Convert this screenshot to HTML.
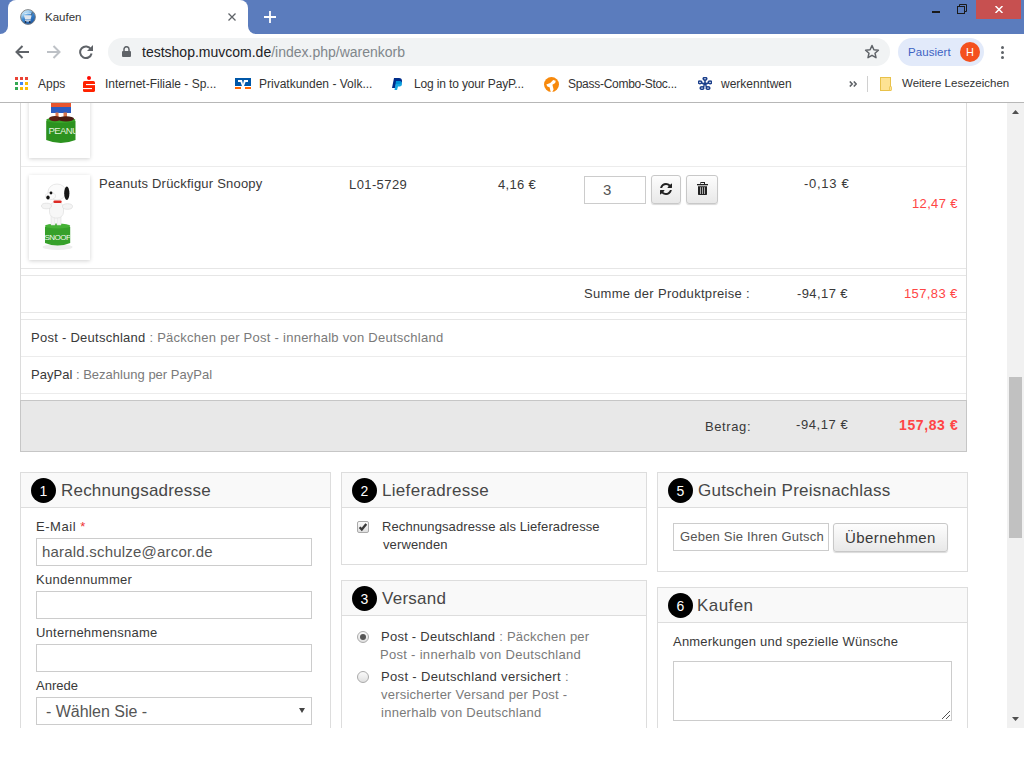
<!DOCTYPE html>
<html><head><meta charset="utf-8">
<style>
*{box-sizing:border-box;margin:0;padding:0}
html,body{width:1024px;height:768px;overflow:hidden;background:#fff;font-family:"Liberation Sans",sans-serif}
.a{position:absolute}
#tabs{left:0;top:0;width:1024px;height:34px;background:#5b7cbd}
#tab{left:8px;top:0;width:240px;height:34px;background:#fff;border-radius:8px 8px 0 0}
.flw{top:26px;width:8px;height:8px;background:#fff}
.flb{top:26px;width:8px;height:8px;background:#5b7cbd}
#toolbar{left:0;top:34px;width:1024px;height:36px;background:#fff}
#omni{left:108px;top:38px;width:782px;height:28px;background:#f1f3f4;border-radius:14px}
.bm{top:78px;font-size:12px;color:#333;white-space:nowrap;line-height:1}
#sep{left:0;top:102px;width:1024px;height:1px;background:#b7b7b7}
#page{left:0;top:103px;width:1007px;height:625px;overflow:hidden;background:#fff}
#sb{left:1007px;top:103px;width:17px;height:625px;background:#f1f1f1}

.t{position:absolute;white-space:nowrap;line-height:1;color:#393939}
.s13{font-size:13px;letter-spacing:0.3px}
.s17{font-size:17px;letter-spacing:0.2px;color:#474747}
.hl{position:absolute;height:1px;background:#e6e6e6}
.vl{position:absolute;width:1px;background:#dcdcdc}
.img{position:absolute;background:#fff;box-shadow:0 1px 4px rgba(0,0,0,0.18)}
.inp{position:absolute;border:1px solid #ccc;background:#fff}
.btn{position:absolute;border:1px solid #c8c8c8;border-radius:3px;background:linear-gradient(#fdfdfd,#e8e8e8);box-shadow:0 1px 1px rgba(0,0,0,0.15)}
.box{position:absolute;border:1px solid #ddd;background:#fff}
.bh{position:absolute;left:0;top:0;right:0;background:#f9f9f9;border-bottom:1px solid #ddd}
.num{position:absolute;width:25px;height:25px;border-radius:50%;background:#000;color:#fff;font-size:14px;line-height:27px;text-align:center}
.red{color:#ff4545}
.gr{color:#7a7a7a}
</style></head><body>
<!-- tab strip -->
<div class="a" id="tabs"></div>
<div class="a flw" style="left:0"></div><div class="a flb" style="left:0;border-bottom-right-radius:8px"></div>
<div class="a flw" style="left:248px"></div><div class="a flb" style="left:248px;border-bottom-left-radius:8px"></div>
<div class="a" id="tab"></div>
<svg class="a" style="left:20px;top:9px" width="16" height="16" viewBox="0 0 16 16">
<defs><linearGradient id="gl" x1="0.1" y1="0" x2="0.7" y2="1"><stop offset="0" stop-color="#e4f2fc"/><stop offset="0.3" stop-color="#9ccdf0"/><stop offset="0.5" stop-color="#3f8ad2"/><stop offset="1" stop-color="#1a56a4"/></linearGradient></defs>
<circle cx="8" cy="8" r="7.4" fill="url(#gl)" stroke="#7a7a7a" stroke-width="0.9"/>
<path d="M3.8 6.2H11.6L10.6 10.4H5.2Z" fill="#dfe5ec"/>
<path d="M11.4 6.4L12.4 3.2" stroke="#5a6470" stroke-width="1"/>
<path d="M4.5 4.8Q8 3.6 11 4.4" stroke="#eaf2fa" stroke-width="0.8" fill="none"/>
<rect x="5" y="11.2" width="5.5" height="1.4" fill="#d8dde4"/>
<circle cx="5.6" cy="13" r="0.9" fill="#1f2d44"/><circle cx="9.8" cy="13" r="0.9" fill="#1f2d44"/>
</svg>
<div id="c1" class="a" style="left:45px;top:12px;font-size:11.5px;line-height:1;color:#333">Kaufen</div>
<svg class="a" style="left:228px;top:13px" width="8" height="8" viewBox="0 0 8 8"><path d="M0.5 0.5L7.5 7.5M7.5 0.5L0.5 7.5" stroke="#5f6368" stroke-width="1.3"/></svg>
<svg class="a" style="left:264px;top:11px" width="12" height="12" viewBox="0 0 12 12"><path d="M6 0V12M0 6H12" stroke="#fff" stroke-width="1.8"/></svg>
<!-- window controls -->
<div class="a" style="left:932px;top:11px;width:8px;height:2px;background:#1a1a1a"></div>
<svg class="a" style="left:957px;top:4px" width="10" height="10" viewBox="0 0 10 10"><rect x="0.5" y="2.5" width="7" height="7" fill="none" stroke="#1a1a1a"/><path d="M2.5 2.5V0.5H9.5V7.5H7.5" fill="none" stroke="#1a1a1a"/></svg>
<div class="a" style="left:976px;top:0;width:45px;height:19px;background:#c75050"></div>
<svg class="a" style="left:995px;top:6px" width="8" height="7" viewBox="0 0 8 7"><path d="M0.5 0L7.5 7M7.5 0L0.5 7" stroke="#fff" stroke-width="1.5"/></svg>
<!-- toolbar -->
<div class="a" id="toolbar"></div>
<svg class="a" style="left:15px;top:45px" width="14" height="14" viewBox="0 0 14 14"><path d="M14 7H1.5M7.5 1L1.5 7L7.5 13" fill="none" stroke="#5f6368" stroke-width="2"/></svg>
<svg class="a" style="left:47px;top:45px" width="14" height="14" viewBox="0 0 14 14"><path d="M0 7H12.5M6.5 1L12.5 7L6.5 13" fill="none" stroke="#bdc1c6" stroke-width="2"/></svg>
<svg class="a" style="left:79px;top:45px" width="14" height="14" viewBox="0 0 14 14"><path d="M11.9 4.2A5.8 5.8 0 1 0 12.6 8.5" fill="none" stroke="#5f6368" stroke-width="2"/><path d="M14 0V6H8z" fill="#5f6368"/></svg>
<div class="a" id="omni"></div>
<svg class="a" style="left:122px;top:46px" width="9" height="11" viewBox="0 0 9 11"><path d="M2 5V3.2A2.5 2.5 0 0 1 7 3.2V5" fill="none" stroke="#5f6368" stroke-width="1.5"/><rect x="0" y="5" width="9" height="6" rx="1" fill="#5f6368"/></svg>
<div id="c3" class="a" style="left:142px;top:45px;font-size:14px;line-height:1;color:#202124;white-space:nowrap">testshop.muvcom.de<span style="color:#80868b">/index.php/warenkorb</span></div>
<svg class="a" style="left:864px;top:44px" width="16" height="16" viewBox="0 0 16 16"><path d="M8 1.5L9.9 5.8L14.4 6.2L11 9.2L12 13.7L8 11.3L4 13.7L5 9.2L1.6 6.2L6.1 5.8Z" fill="none" stroke="#5f6368" stroke-width="1.5" stroke-linejoin="round"/></svg>
<div class="a" style="left:898px;top:38px;width:86px;height:28px;background:#e2eafa;border-radius:14px"></div>
<div id="c2" class="a" style="left:908px;top:47px;font-size:11.5px;line-height:1;color:#3d62c4;letter-spacing:0.071px">Pausiert</div>
<div class="a" style="left:960px;top:42px;width:20px;height:20px;border-radius:10px;background:#f4511e;color:#fff;font-size:11px;line-height:21px;text-align:center">H</div>
<div class="a" style="left:1001px;top:46px;width:3.2px;height:3.2px;border-radius:50%;background:#5f6368"></div>
<div class="a" style="left:1001px;top:51px;width:3.2px;height:3.2px;border-radius:50%;background:#5f6368"></div>
<div class="a" style="left:1001px;top:56px;width:3.2px;height:3.2px;border-radius:50%;background:#5f6368"></div>
<!-- bookmarks -->
<svg class="a" style="left:15px;top:77px" width="13" height="13" viewBox="0 0 13 13">
<rect x="0" y="0" width="3" height="3" fill="#ea4335"/><rect x="5" y="0" width="3" height="3" fill="#ea4335"/><rect x="10" y="0" width="3" height="3" fill="#ea4335"/>
<rect x="0" y="5" width="3" height="3" fill="#34a853"/><rect x="5" y="5" width="3" height="3" fill="#4285f4"/><rect x="10" y="5" width="3" height="3" fill="#fbbc05"/>
<rect x="0" y="10" width="3" height="3" fill="#34a853"/><rect x="5" y="10" width="3" height="3" fill="#fbbc05"/><rect x="10" y="10" width="3" height="3" fill="#fbbc05"/>
</svg>
<div id="b1" class="a bm" style="left:38px">Apps</div>
<svg class="a" style="left:83px;top:76px" width="12" height="16" viewBox="0 0 12 16"><circle cx="6" cy="2" r="2" fill="#ff0a00"/><rect x="0" y="5" width="12" height="11" rx="1.6" fill="#ff2200"/><rect x="3" y="8" width="9" height="1.1" fill="#fff"/><rect x="0" y="12" width="9" height="1.1" fill="#fff"/></svg>
<div id="b2" class="a bm" style="left:105px">Internet-Filiale - Sp...</div>
<svg class="a" style="left:235px;top:78px" width="16" height="11" viewBox="0 0 16 11"><rect x="0" y="0" width="16" height="8" fill="#0057a8"/><path d="M3 2H7L8 6L9 2H13V4H10.5L9 8H7L5.5 4H3Z" fill="#fff"/><rect x="0" y="9" width="6" height="2" fill="#ff6600"/><rect x="10" y="9" width="6" height="2" fill="#ff6600"/></svg>
<div id="b3" class="a bm" style="left:259px">Privatkunden - Volk...</div>
<svg class="a" style="left:392px;top:78px" width="11" height="12" viewBox="0 0 11 12"><path d="M2 0H7A3 3 0 0 1 7 6H4L3 10H0Z" fill="#002c8a"/><path d="M4 3H8.5A3 3 0 0 1 8 8.5H6L5 12H2.5Z" fill="#009cde" opacity="0.9"/></svg>
<div id="b4" class="a bm" style="left:414px;letter-spacing:-0.148px">Log in to your PayP...</div>
<svg class="a" style="left:544px;top:77px" width="15" height="15" viewBox="0 0 15 15"><circle cx="7.5" cy="7.5" r="7.5" fill="#f7890c"/><path d="M2.3 7.6L6.2 5.9L9.2 2.9L11.7 3.8L11.2 6.1L8.4 7.8L9.6 12.6L8.2 15.2L6.6 14.8L5.6 10.2L3.4 9.4Z" fill="#fff"/></svg>
<div id="b5" class="a bm" style="left:568px;letter-spacing:-0.278px">Spass-Combo-Stoc...</div>
<svg class="a" style="left:698px;top:77px" width="14" height="13" viewBox="0 0 14 13"><g fill="none" stroke="#1b3f8b" stroke-width="1.6"><ellipse cx="7" cy="1.8" rx="1.8" ry="1.3"/><ellipse cx="2" cy="5.3" rx="1.8" ry="1.3"/><ellipse cx="12" cy="5.3" rx="1.8" ry="1.3"/><ellipse cx="4" cy="11" rx="1.8" ry="1.3"/><ellipse cx="10" cy="11" rx="1.8" ry="1.3"/></g><rect x="5.5" y="5.5" width="3" height="3" fill="#1b3f8b"/><path d="M7 3V6M3.5 6L6 7M10.5 6L8 7M5 10L6.5 8.5M9 10L7.5 8.5" stroke="#1b3f8b" stroke-width="1.5"/></svg>
<div id="b6" class="a bm" style="left:721px">werkenntwen</div>
<svg class="a" style="left:849px;top:81px" width="8" height="6" viewBox="0 0 8 6"><path d="M0.8 0.5L3.2 3L0.8 5.5M4.8 0.5L7.2 3L4.8 5.5" fill="none" stroke="#5f6368" stroke-width="1.6"/></svg>
<div class="a" style="left:867px;top:76px;width:1px;height:16px;background:#d0d0d0"></div>
<svg class="a" style="left:880px;top:77px" width="12" height="14" viewBox="0 0 12 14"><rect x="0.5" y="0.5" width="10" height="13" fill="#fde293" stroke="#e8c14a"/><rect x="9.5" y="9.5" width="2" height="4" rx="0.6" fill="#fde293" stroke="#e8c14a" stroke-width="0.8"/></svg>
<div id="b7" class="a bm" style="left:902px;font-size:11.5px">Weitere Lesezeichen</div>
<div class="a" id="sep"></div>
<!-- page -->
<div class="a" id="page"></div>

<div class="a" style="left:0;top:0;width:1007px;height:728px;clip-path:inset(103px 0 0 0)">
<!-- product table -->
<div class="vl" style="left:20px;top:103px;height:297px"></div>
<div class="vl" style="left:966px;top:103px;height:297px"></div>
<div class="img" style="left:29px;top:90px;width:61px;height:68px">
<svg width="61" height="68" viewBox="0 0 61 68">
<defs><clipPath id="cp1"><path d="M17.2 31Q31.8 26 46.5 31V50Q31.8 56 17.2 50Z"/></clipPath></defs>
<rect x="22" y="12" width="20" height="5.5" fill="#e8552e"/>
<rect x="22" y="17" width="20" height="6" fill="#2b5cc0"/>
<rect x="26.5" y="22.5" width="3" height="5" fill="#e07a50"/><rect x="34.5" y="22.5" width="3.5" height="5" fill="#d8744a"/>
<path d="M17.2 31Q31.8 26 46.5 31V50Q31.8 56 17.2 50Z" fill="#2c921f"/>
<ellipse cx="31.8" cy="30" rx="14.6" ry="3" fill="#38a428"/>
<ellipse cx="26" cy="28.6" rx="6" ry="2.6" fill="#5a2015"/><ellipse cx="37" cy="28.8" rx="8" ry="2.6" fill="#4a1c12"/>
<g clip-path="url(#cp1)"><text x="19.5" y="43.5" font-size="9.5" fill="#e6f2de" font-family="Liberation Sans" letter-spacing="-0.6">PEANUTS</text></g>
</svg></div>
<div class="hl" style="left:21px;top:166px;width:945px;background:#ececec"></div>
<div class="img" style="left:29px;top:175px;width:61px;height:85px">
<svg width="61" height="85" viewBox="0 0 61 85">
<defs><clipPath id="cp2"><path d="M16 52Q28.6 47.5 41.2 52V68Q28.6 73 16 68Z"/></clipPath></defs>
<ellipse cx="28.6" cy="72" rx="15" ry="3" fill="#eee"/>
<path d="M16 52Q28.6 47.5 41.2 52V68Q28.6 73 16 68Z" fill="#36a02a"/>
<ellipse cx="28.6" cy="51" rx="12.6" ry="2.6" fill="#45b236"/>
<g clip-path="url(#cp2)"><text x="15.5" y="65" font-size="8" fill="#f0f8ea" font-family="Liberation Sans" letter-spacing="-0.5">SNOOPY</text></g>
<path d="M22 40H26V50H22Z M28 40H32V50H28Z" fill="#f4f4f4" stroke="#d8d8d8" stroke-width="0.5"/>
<rect x="20.5" y="27" width="14" height="16" rx="6" fill="#f7f7f7" stroke="#dcdcdc" stroke-width="0.6"/>
<ellipse cx="17.5" cy="31" rx="5" ry="2.8" fill="#f4f4f4" stroke="#d6d6d6" stroke-width="0.6"/>
<ellipse cx="38.5" cy="31.5" rx="5" ry="2.8" fill="#f4f4f4" stroke="#d6d6d6" stroke-width="0.6"/>
<ellipse cx="28" cy="17" rx="9" ry="8" fill="#fbfbfb" stroke="#dadada" stroke-width="0.6"/>
<ellipse cx="21.5" cy="21" rx="5" ry="3.6" fill="#fbfbfb" stroke="#dadada" stroke-width="0.6"/>
<ellipse cx="19" cy="22.4" rx="1.7" ry="2" fill="#111"/>
<circle cx="22" cy="18" r="1.4" fill="#111"/>
<ellipse cx="37.8" cy="18.3" rx="2.6" ry="6.8" fill="#151515"/>
<rect x="24.4" y="25.6" width="8.3" height="2.4" rx="1.2" fill="#dd2b25"/>
</svg></div>
<div id="t1" class="t s13" style="left:99px;top:177px;letter-spacing:0.21px">Peanuts Drückfigur Snoopy</div>
<div id="t2" class="t s13" style="left:349px;top:178px;letter-spacing:0.4px">L01-5729</div>
<div id="t3" class="t s13" style="left:498px;top:178px;letter-spacing:0.3px">4,16 €</div>
<div class="inp" style="left:584px;top:176px;width:62px;height:28px"></div>
<div id="t4" class="t" style="left:603px;top:182px;font-size:15px;color:#555">3</div>
<div class="btn" style="left:651px;top:175px;width:30px;height:29px"></div>
<svg class="a" style="left:660px;top:183px" width="12" height="12" viewBox="0 0 1536 1536"><path fill="#222" d="M1511 928q0 5-1 7-64 268-268 434.5t-478 166.5q-146 0-282.5-55t-243.5-157l-129 129q-19 19-45 19t-45-19-19-45v-448q0-26 19-45t45-19h448q26 0 45 19t19 45-19 45l-137 137q71 66 161 102t187 36q134 0 250-65t186-179q11-17 53-117 8-23 30-23h192q13 0 22.5 9.5t9.5 22.5zm25-800v448q0 26-19 45t-45 19h-448q-26 0-45-19t-19-45 19-45l138-138q-148-137-349-137-134 0-250 65t-186 179q-11 17-53 117-8 23-30 23h-199q-13 0-22.5-9.5t-9.5-22.5v-7q65-268 270-434.5t480-166.5q146 0 284 55.5t245 156.5l130-129q19-19 45-19t45 19 19 45z"/></svg>
<div class="btn" style="left:686px;top:175px;width:32px;height:29px"></div>
<svg class="a" style="left:697px;top:182px" width="11" height="13" viewBox="0 0 11 13"><rect x="0" y="2" width="11" height="1.3" fill="#222"/><rect x="3.9" y="0.5" width="3.6" height="2" fill="none" stroke="#222" stroke-width="1"/><path d="M1 4.2H10V12.3Q10 13 9.3 13H1.7Q1 13 1 12.3Z" fill="#222"/><path d="M3.5 5.2V12M5.5 5.2V12M7.5 5.2V12" stroke="#bbb" stroke-width="0.9"/></svg>
<div id="t5" class="t s13" style="left:804px;top:177px;letter-spacing:0.7px">-0,13 €</div>
<div id="t6" class="t s13 red" style="left:912px;top:197px;letter-spacing:0.35px">12,47 €</div>
<div class="hl" style="left:21px;top:268px;width:945px"></div>
<div class="hl" style="left:21px;top:275px;width:945px"></div>
<div id="t7" class="t s13" style="left:584px;top:287px;letter-spacing:0.31px">Summe der Produktpreise :</div>
<div id="t8" class="t s13" style="left:797px;top:287px;letter-spacing:0.4px">-94,17 €</div>
<div id="t9" class="t s13 red" style="left:904px;top:287px;letter-spacing:0.37px">157,83 €</div>
<div class="hl" style="left:21px;top:312px;width:945px"></div>
<div class="hl" style="left:21px;top:319px;width:945px"></div>
<div id="t10" class="t s13" style="left:31px;top:331px;letter-spacing:0.26px">Post - Deutschland <span class="gr">: Päckchen per Post - innerhalb von Deutschland</span></div>
<div class="hl" style="left:21px;top:356px;width:945px;background:#ececec"></div>
<div id="t11" class="t s13" style="left:31px;top:368px;letter-spacing:0.015px">PayPal <span class="gr">: Bezahlung per PayPal</span></div>
<div class="hl" style="left:21px;top:393px;width:945px;background:#ececec"></div>
<div class="a" style="left:20px;top:400px;width:947px;height:52px;background:#e8e8e8;border:1px solid #c6c6c6"></div>
<div id="t12" class="t s13" style="left:705px;top:420px;letter-spacing:0.6px">Betrag:</div>
<div id="t13" class="t s13" style="left:796px;top:418px;letter-spacing:0.59px">-94,17 €</div>
<div id="t14" class="t red" style="left:899px;top:418px;font-size:14px;font-weight:bold;letter-spacing:0.614px">157,83 €</div>

<!-- box 1 -->
<div class="box" style="left:20px;top:472px;width:311px;height:300px"><div class="bh" style="height:35px"></div></div>
<div class="num" style="left:31px;top:478px">1</div>
<div id="t15" class="t s17" style="left:61px;top:482px;letter-spacing:0.21px">Rechnungsadresse</div>
<div id="t16" class="t s13" style="left:36px;top:520px;letter-spacing:0.54px">E-Mail <span style="color:#e33">*</span></div>
<div class="inp" style="left:36px;top:538px;width:276px;height:28px"></div>
<div id="t17" class="t" style="left:42px;top:544px;font-size:15px;color:#555;letter-spacing:0.2px">harald.schulze@arcor.de</div>
<div id="t18" class="t s13" style="left:36px;top:573px;letter-spacing:0.31px">Kundennummer</div>
<div class="inp" style="left:36px;top:591px;width:276px;height:28px"></div>
<div id="t19" class="t s13" style="left:36px;top:626px;letter-spacing:0.23px">Unternehmensname</div>
<div class="inp" style="left:36px;top:644px;width:276px;height:28px"></div>
<div id="t20" class="t s13" style="left:36px;top:679px;letter-spacing:0px">Anrede</div>
<div class="inp" style="left:36px;top:697px;width:276px;height:28px"></div>
<div id="t21" class="t" style="left:46px;top:704px;font-size:16px;color:#555;letter-spacing:-0.02px">- Wählen Sie -</div>
<svg class="a" style="left:299px;top:708px" width="6" height="5" viewBox="0 0 6 5"><path d="M0 0H6L3 5Z" fill="#444"/></svg>

<!-- box 2 -->
<div class="box" style="left:341px;top:472px;width:306px;height:93px"><div class="bh" style="height:35px"></div></div>
<div class="num" style="left:352px;top:478px">2</div>
<div id="t22" class="t s17" style="left:382px;top:482px;letter-spacing:0.31px">Lieferadresse</div>
<div class="a" style="left:357px;top:521px;width:12px;height:12px;border:1px solid #aaa;border-radius:2px;background:linear-gradient(#fafafa,#e0e0e0)"></div>
<svg class="a" style="left:358px;top:522px" width="10" height="10" viewBox="0 0 10 10"><path d="M1.6 5.3L3.8 7.6L8.3 2.1" fill="none" stroke="#3a3a3a" stroke-width="2.3"/></svg>
<div id="t23" class="t s13" style="left:382px;top:520px;letter-spacing:0.09px">Rechnungsadresse als Lieferadresse</div>
<div id="t24" class="t s13" style="left:383px;top:538px;letter-spacing:0.11px">verwenden</div>

<!-- box 3 -->
<div class="box" style="left:341px;top:580px;width:306px;height:200px"><div class="bh" style="height:35px"></div></div>
<div class="num" style="left:352px;top:586px">3</div>
<div id="t25" class="t s17" style="left:382px;top:590px;letter-spacing:0.27px">Versand</div>
<div class="a" style="left:357px;top:631px;width:12px;height:12px;border:1px solid #aaa;border-radius:50%;background:linear-gradient(#fafafa,#e0e0e0)"></div>
<div class="a" style="left:360px;top:634px;width:6px;height:6px;border-radius:50%;background:#555"></div>
<div id="t26" class="t s13" style="left:381px;top:630px;letter-spacing:0.25px">Post - Deutschland <span class="gr">: Päckchen per</span></div>
<div id="t27" class="t s13 gr" style="left:380px;top:648px;letter-spacing:0.3px">Post - innerhalb von Deutschland</div>
<div class="a" style="left:357px;top:671px;width:12px;height:12px;border:1px solid #aaa;border-radius:50%;background:linear-gradient(#fafafa,#e0e0e0)"></div>
<div id="t28" class="t s13" style="left:381px;top:670px;letter-spacing:0.35px">Post - Deutschland versichert <span class="gr">:</span></div>
<div id="t29" class="t s13 gr" style="left:381px;top:688px;letter-spacing:0.23px">versicherter Versand per Post -</div>
<div id="t30" class="t s13 gr" style="left:381px;top:706px;letter-spacing:0.26px">innerhalb von Deutschland</div>

<!-- box 5 -->
<div class="box" style="left:657px;top:472px;width:311px;height:100px"><div class="bh" style="height:35px"></div></div>
<div class="num" style="left:668px;top:478px">5</div>
<div id="t31" class="t s17" style="left:698px;top:482px;letter-spacing:0.23px">Gutschein Preisnachlass</div>
<div class="inp" style="left:673px;top:523px;width:156px;height:28px"></div>
<div id="t32" class="t s13" style="left:680px;top:530px;color:#555;letter-spacing:0.2px">Geben Sie Ihren Gutsch</div>
<div class="btn" style="left:833px;top:523px;width:115px;height:29px"></div>
<div id="t33" class="t" style="left:845px;top:530px;font-size:15px;letter-spacing:0.41px">Übernehmen</div>

<!-- box 6 -->
<div class="box" style="left:657px;top:587px;width:311px;height:200px"><div class="bh" style="height:35px"></div></div>
<div class="num" style="left:668px;top:593px">6</div>
<div id="t34" class="t s17" style="left:697px;top:597px;letter-spacing:0.42px">Kaufen</div>
<div id="t35" class="t s13" style="left:673px;top:635px;letter-spacing:0.21px">Anmerkungen und spezielle Wünsche</div>
<div class="inp" style="left:673px;top:661px;width:279px;height:60px"></div>
<svg class="a" style="left:942px;top:711px" width="8" height="8" viewBox="0 0 8 8"><path d="M0 8L8 0M4 8L8 4" stroke="#555" stroke-width="1"/></svg>

</div>
<div class="a" style="left:0;top:728px;width:1024px;height:40px;background:#fff"></div>

<!-- scrollbar -->
<div class="a" id="sb"></div>
<svg class="a" style="left:1012px;top:110px" width="7" height="4" viewBox="0 0 7 4"><path d="M0 4L3.5 0L7 4Z" fill="#505050"/></svg>
<div class="a" style="left:1009px;top:377px;width:13px;height:161px;background:#c1c1c1"></div>
<svg class="a" style="left:1012px;top:717px" width="7" height="4" viewBox="0 0 7 4"><path d="M0 0L3.5 4L7 0Z" fill="#505050"/></svg>
</body></html>
